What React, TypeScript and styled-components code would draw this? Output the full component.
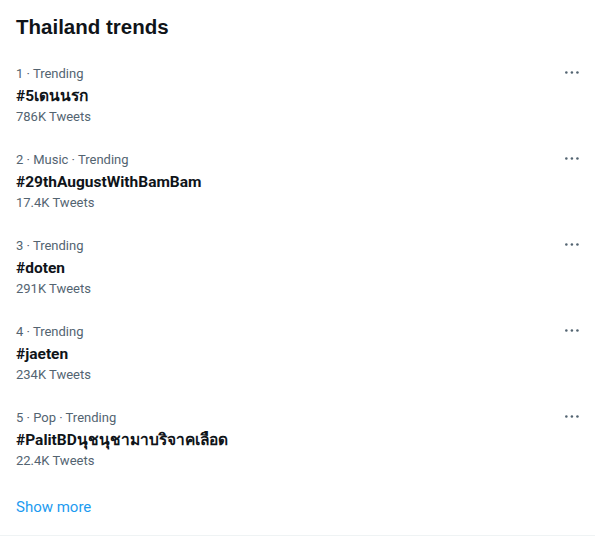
import React from "react";
import styled, { createGlobalStyle } from "styled-components";

const GlobalStyle = createGlobalStyle`
  html, body { margin: 0; padding: 0; background: #ffffff; }
  body { font-family: Roboto, "Liberation Sans", "Noto Sans", sans-serif; -webkit-font-smoothing: antialiased; }
  * { box-sizing: border-box; }
`;

const Card = styled.section`
  width: 595px;
  border-bottom: 1px solid #eff3f4;
  background: #ffffff;
  display: flex;
  flex-direction: column;
`;

const Header = styled.h2`
  margin: 0;
  padding: 15px 16px 15px;
  font-family: "Liberation Sans", Arial, sans-serif;
  font-size: 20.5px;
  line-height: 24px;
  font-weight: 700;
  color: #0f1419;
`;

const List = styled.div`
  display: flex;
  flex-direction: column;
`;

const Row = styled.div`
  display: flex;
  align-items: flex-start;
  justify-content: space-between;
  padding: 12px 14px 13px 16px;
`;

const Body = styled.div`
  display: flex;
  flex-direction: column;
`;

const Meta = styled.span`
  font-size: 13px;
  line-height: 16px;
  color: #536471;
`;

const Topic = styled.span`
  margin-top: 4px;
  font-size: 15.5px;
  line-height: 20px;
  font-weight: 700;
  color: #0f1419;
`;

const Count = styled.span`
  margin-top: 1px;
  font-size: 13px;
  line-height: 20px;
  color: #536471;
`;

const MoreButton = styled.button`
  border: 0;
  background: transparent;
  padding: 0;
  margin-top: -3px;
  width: 19px;
  height: 19px;
  display: flex;
  align-items: center;
  justify-content: center;
  color: #536471;
  cursor: pointer;
`;

const ShowMore = styled.a`
  display: block;
  padding: 13px 16px 18px;
  font-size: 15px;
  line-height: 20px;
  color: #1d9bf0;
  text-decoration: none;
`;

const trends = [
  { meta: "1 · Trending", topic: "#5เดนนรก", count: "786K Tweets" },
  { meta: "2 · Music · Trending", topic: "#29thAugustWithBamBam", count: "17.4K Tweets" },
  { meta: "3 · Trending", topic: "#doten", count: "291K Tweets" },
  { meta: "4 · Trending", topic: "#jaeten", count: "234K Tweets" },
  { meta: "5 · Pop · Trending", topic: "#PalitBDนุชนุชามาบริจาคเลือด", count: "22.4K Tweets" },
];

const Dots = () => (
  <svg width="19" height="19" viewBox="0 0 24 24" fill="currentColor">
    <circle cx="5.5" cy="12" r="1.6" />
    <circle cx="12.5" cy="12" r="1.6" />
    <circle cx="19.5" cy="12" r="1.6" />
  </svg>
);

export default function App() {
  return (
    <>
      <GlobalStyle />
      <Card>
        <Header>Thailand trends</Header>
        <List>
          {trends.map((t) => (
            <Row key={t.topic}>
              <Body>
                <Meta>{t.meta}</Meta>
                <Topic>{t.topic}</Topic>
                <Count>{t.count}</Count>
              </Body>
              <MoreButton aria-label="More">
                <Dots />
              </MoreButton>
            </Row>
          ))}
        </List>
        <ShowMore href="#">Show more</ShowMore>
      </Card>
    </>
  );
}
